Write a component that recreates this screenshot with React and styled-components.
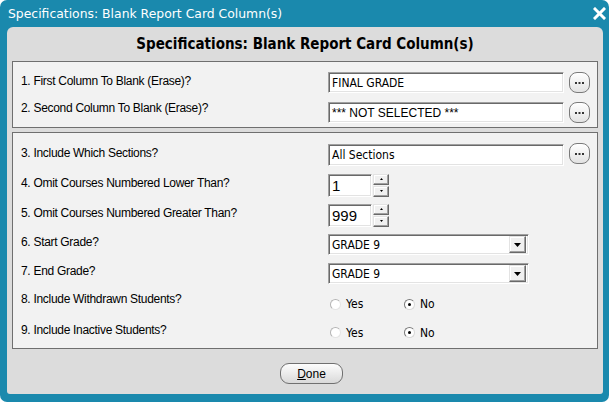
import styled, { createGlobalStyle } from 'styled-components';

const GlobalStyle = createGlobalStyle`
  html, body {
    margin: 0;
    padding: 0;
    background: #fff;
  }
  body {
    font-family: 'Liberation Sans', Arial, sans-serif;
  }
`;

const TAHOMA = `'DejaVu Sans Condensed', 'DejaVu Sans', sans-serif`;

const Window = styled.div`
  width: 609px;
  height: 402px;
  box-sizing: border-box;
  background: #1a89ad;
  border-radius: 7px;
  padding: 0 6px 8px 7px;
  display: flex;
  flex-direction: column;
  overflow: hidden;
`;

const TitleBar = styled.div`
  height: 27px;
  display: flex;
  align-items: center;
  justify-content: space-between;
  padding-left: 1px;
  color: #fff;
  font-family: 'DejaVu Sans', sans-serif;
  font-size: 12.4px;
`;

const CloseBox = styled.div`
  width: 13px;
  height: 13px;
  margin-right: -3px;
  margin-bottom: 1px;
  display: flex;
`;

const Panel = styled.div`
  flex: 1;
  background: #dcdcdc;
  border-radius: 6px 6px 3px 3px;
  padding: 0 5px;
  display: flex;
  flex-direction: column;
`;

const Heading = styled.div`
  height: 34px;
  display: flex;
  align-items: center;
  justify-content: center;
  font-family: ${TAHOMA};
  font-weight: bold;
  font-size: 15px;
  color: #000;
`;

const Group = styled.div`
  background: #f2f2f2;
  border: 1px solid #6f6f6f;
  padding: ${(p) => p.$pad};
  margin-top: ${(p) => p.$mt || 0}px;
  display: flex;
  flex-direction: column;
  gap: ${(p) => p.$gap || 0}px;
`;

const Row = styled.div`
  height: ${(p) => p.$h}px;
  display: flex;
  align-items: center;
  padding-left: 8px;
`;

const Label = styled.div`
  width: 307px;
  flex: none;
  font-size: 12px;
  letter-spacing: -0.3px;
  color: #000;
  margin-bottom: ${(p) => p.$lift || 5}px;
`;

const sunken = `
  box-sizing: border-box;
  background: #fff;
  border-style: solid;
  border-width: 1px;
  border-color: #a0a0a0 #fff #fff #a0a0a0;
  box-shadow: inset 1px 1px 0 #696969, inset -1px -1px 0 #e3e3e3;
`;

const TextField = styled.div`
  ${sunken}
  width: ${(p) => p.$w}px;
  height: ${(p) => p.$h || 21}px;
  display: flex;
  align-items: center;
  padding-left: 3px;
  font-family: ${(p) => p.$font};
  font-size: ${(p) => p.$size}px;
  color: #000;
  white-space: nowrap;
`;

const EllipsisButton = styled.div`
  width: 21px;
  height: 21px;
  box-sizing: border-box;
  margin-left: 5px;
  margin-top: ${(p) => p.$up || 0}px;
  border: 1px solid #7a7a7a;
  border-radius: 8px;
  background: linear-gradient(#ffffff, #e2e2e2);
  display: flex;
  align-items: center;
  justify-content: center;
`;

const SpinStack = styled.div`
  display: flex;
  flex-direction: column;
  gap: 1px;
  margin-left: 1px;
`;

const SpinButton = styled.div`
  width: 16px;
  height: 11px;
  box-sizing: border-box;
  background: #f0f0f0;
  border-style: solid;
  border-width: 1px;
  border-color: #e3e3e3 #696969 #696969 #e3e3e3;
  box-shadow: inset -1px -1px 0 #a0a0a0, inset 1px 1px 0 #fff;
  display: flex;
  align-items: center;
  justify-content: center;
`;

const Select = styled.div`
  ${sunken}
  width: 201px;
  height: 21px;
  display: flex;
  align-items: center;
  justify-content: space-between;
  padding: 0 2px 0 3px;
  font-family: ${TAHOMA};
  font-size: 12px;
  color: #000;
`;

const ArrowButton = styled.div`
  width: 17px;
  height: 17px;
  box-sizing: border-box;
  background: #f0f0f0;
  border-style: solid;
  border-width: 1px;
  border-color: #e3e3e3 #696969 #696969 #e3e3e3;
  box-shadow: inset -1px -1px 0 #a0a0a0, inset 1px 1px 0 #fff;
  display: flex;
  align-items: center;
  justify-content: center;
`;

const RadioGroup = styled.div`
  display: flex;
  padding-left: 2px;
`;

const RadioOption = styled.div`
  width: ${(p) => p.$w}px;
  display: flex;
  align-items: center;
  gap: 5px;
  font-family: ${TAHOMA};
  font-size: 12px;
  color: #000;
`;

const RadioCircle = styled.div`
  width: 11px;
  height: 11px;
  box-sizing: border-box;
  border-radius: 50%;
  background: #fff;
  border: 1px solid;
  border-color: ${(p) =>
    p.$on ? '#7a7a7a #d8d8d8 #d8d8d8 #7a7a7a' : '#b4b4b4 #e4e4e4 #e4e4e4 #b4b4b4'};
  display: flex;
  align-items: center;
  justify-content: center;

  &::after {
    content: '';
    display: ${(p) => (p.$on ? 'block' : 'none')};
    width: 3px;
    height: 3px;
    border-radius: 50%;
    background: #000;
  }
`;

const Footer = styled.div`
  flex: 1;
  display: flex;
  justify-content: center;
  align-items: flex-start;
  padding-top: 14px;
`;

const DoneButton = styled.div`
  width: 63px;
  height: 21px;
  box-sizing: border-box;
  margin-left: 13px;
  border: 1px solid #707070;
  border-radius: 9px;
  background: linear-gradient(#fdfdfd, #d9d9d9);
  display: flex;
  align-items: center;
  justify-content: center;
  font-size: 12px;
  color: #000;

  u {
    text-decoration: underline;
  }
`;

const Dots = () => (
  <svg width="9" height="2" viewBox="0 0 9 2">
    <rect x="0" y="0" width="2" height="2" fill="#333" />
    <rect x="3.5" y="0" width="2" height="2" fill="#333" />
    <rect x="7" y="0" width="2" height="2" fill="#333" />
  </svg>
);

const Tri = ({ dir = 'down', w = 7, h = 4 }) => (
  <svg width={w} height={h} viewBox={`0 0 ${w} ${h}`}>
    {dir === 'down' ? (
      <polygon points={`0,0 ${w},0 ${w / 2},${h}`} fill="#000" />
    ) : (
      <polygon points={`0,${h} ${w},${h} ${w / 2},0`} fill="#000" />
    )}
  </svg>
);

const CloseIcon = () => (
  <svg width="13" height="13" viewBox="0 0 13 13">
    <path d="M2 2 L11 11 M11 2 L2 11" stroke="#fff" strokeWidth="3" strokeLinecap="square" />
  </svg>
);

function Spinner({ value }) {
  return (
    <>
      <TextField $w={44} $h={23} $font="'Liberation Sans', Arial, sans-serif" $size={15}>
        {value}
      </TextField>
      <SpinStack>
        <SpinButton><Tri dir="up" w={3} h={2} /></SpinButton>
        <SpinButton><Tri dir="down" w={3} h={2} /></SpinButton>
      </SpinStack>
    </>
  );
}

function GradeSelect({ value }) {
  return (
    <Select>
      <span>{value}</span>
      <ArrowButton><Tri dir="down" w={7} h={4} /></ArrowButton>
    </Select>
  );
}

function YesNo() {
  return (
    <RadioGroup>
      <RadioOption $w={74}><RadioCircle />Yes</RadioOption>
      <RadioOption $w={60}><RadioCircle $on />No</RadioOption>
    </RadioGroup>
  );
}

function App() {
  return (
    <>
      <GlobalStyle />
      <Window>
        <TitleBar>
          <span>Specifications: Blank Report Card Column(s)</span>
          <CloseBox><CloseIcon /></CloseBox>
        </TitleBar>
        <Panel>
          <Heading>Specifications: Blank Report Card Column(s)</Heading>

          <Group $pad="10px 0 4px" $gap={9}>
            <Row $h={21}>
              <Label $lift={4}>1. First Column To Blank (Erase)?</Label>
              <TextField $w={236} $font={TAHOMA} $size={12}>
                FINAL GRADE
              </TextField>
              <EllipsisButton><Dots /></EllipsisButton>
            </Row>
            <Row $h={21}>
              <Label $lift={9}>2. Second Column To Blank (Erase)?</Label>
              <TextField $w={236} $font="'Liberation Sans', Arial, sans-serif" $size={12}>
                *** NOT SELECTED ***
              </TextField>
              <EllipsisButton><Dots /></EllipsisButton>
            </Row>
          </Group>

          <Group $pad="7px 0 3px" $mt={4}>
            <Row $h={30}>
              <Label>3. Include Which Sections?</Label>
              <TextField $w={236} $h={22} $font={TAHOMA} $size={12}>All Sections</TextField>
              <EllipsisButton $up={-3}><Dots /></EllipsisButton>
            </Row>
            <Row $h={30}>
              <Label>4. Omit Courses Numbered Lower Than?</Label>
              <Spinner value="1" />
            </Row>
            <Row $h={30}>
              <Label>5. Omit Courses Numbered Greater Than?</Label>
              <Spinner value="999" />
            </Row>
            <Row $h={29}>
              <Label $lift={6}>6. Start Grade?</Label>
              <GradeSelect value="GRADE 9" />
            </Row>
            <Row $h={29}>
              <Label>7. End Grade?</Label>
              <GradeSelect value="GRADE 9" />
            </Row>
            <Row $h={32}>
              <Label $lift={10}>8. Include Withdrawn Students?</Label>
              <YesNo />
            </Row>
            <Row $h={25}>
              <Label $lift={6}>9. Include Inactive Students?</Label>
              <YesNo />
            </Row>
          </Group>

          <Footer>
            <DoneButton><span><u>D</u>one</span></DoneButton>
          </Footer>
        </Panel>
      </Window>
    </>
  );
}

export default App;
